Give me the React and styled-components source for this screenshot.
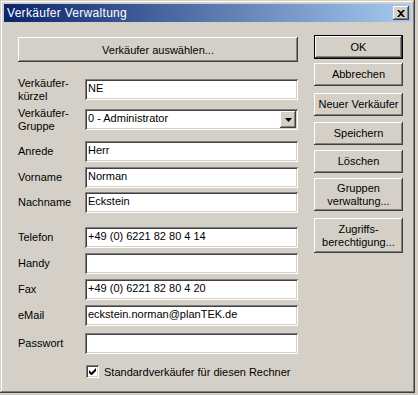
import React from "react";
import styled, { createGlobalStyle, css } from "styled-components";

const GlobalStyle = createGlobalStyle`
  html, body {
    margin: 0;
    background: #d4d0c8;
  }
  body {
    font-family: "Liberation Sans", Arial, sans-serif;
    font-size: 11px;
    color: #000;
  }
`;

const raised = css`
  background: #d4d0c8;
  box-shadow: inset -1px -1px #404040, inset 1px 1px #ffffff,
    inset -2px -2px #808080, inset 2px 2px #d4d0c8;
`;

const sunken = css`
  background: #ffffff;
  box-shadow: inset 1px 1px #808080, inset -1px -1px #ffffff,
    inset 2px 2px #404040, inset -2px -2px #d4d0c8;
`;

const Window = styled.div`
  width: 415px;
  height: 393px;
  box-sizing: border-box;
  padding: 4px;
  background: #d4d0c8;
  box-shadow: inset -1px -1px #404040, inset 1px 1px #d4d0c8,
    inset -2px -2px #808080, inset 2px 2px #ffffff;
`;

const TitleBar = styled.div`
  height: 18px;
  display: flex;
  align-items: center;
  justify-content: space-between;
  padding: 0 2px 0 3px;
  background: linear-gradient(to right, #0a246a, #a6caf0);
  color: #fff;
  font-size: 12px;
  letter-spacing: 0.3px;
`;

const CloseButton = styled.div`
  ${raised};
  width: 16px;
  height: 14px;
  display: flex;
  align-items: center;
  justify-content: center;
`;

const Body = styled.div`
  display: flex;
  align-items: flex-start;
  padding: 13px 8px 0 14px;
  gap: 16px;
`;

const LeftColumn = styled.div`
  width: 280px;
  padding-top: 2px;
`;

const RightColumn = styled.div`
  width: 89px;
  display: flex;
  flex-direction: column;
`;

const Button = styled.div`
  ${raised};
  box-sizing: border-box;
  height: ${p => p.$h || 23}px;
  margin-top: ${p => p.$mt || 0}px;
  display: flex;
  align-items: center;
  justify-content: center;
  text-align: center;
  line-height: 13px;
  ${p =>
    p.$default &&
    css`
      box-shadow: inset 0 0 0 1px #000, inset -2px -2px #404040,
        inset 2px 2px #ffffff, inset -3px -3px #808080,
        inset 3px 3px #d4d0c8;
    `}
`;

const WideButton = styled(Button)`
  width: 280px;
  height: 25px;
  padding-top: 1px;
`;

const Row = styled.div`
  display: flex;
  align-items: center;
  height: 21px;
  margin-top: ${p => p.$mt || 0}px;
`;

const Label = styled.div`
  width: 67px;
  flex: none;
  line-height: 13px;
`;

const Field = styled.div`
  ${sunken};
  box-sizing: border-box;
  width: 214px;
  height: 21px;
  padding: 2px 3px 0;
  line-height: 14px;
  white-space: nowrap;
  position: relative;
`;

const DropButton = styled.div`
  ${raised};
  position: absolute;
  top: 2px;
  right: 2px;
  width: 16px;
  height: 17px;
  display: flex;
  align-items: center;
  justify-content: center;
`;

const CheckRow = styled.div`
  display: flex;
  align-items: center;
  gap: 5px;
  margin: 11px 0 0 68px;
`;

const CheckBox = styled.div`
  ${sunken};
  width: 13px;
  height: 13px;
  display: flex;
  align-items: center;
  justify-content: center;
`;

const fields = [
  { label: <>Verkäufer-<br />kürzel</>, value: "NE", mt: 17 },
  { label: <>Verkäufer-<br />Gruppe</>, value: "0 - Administrator", mt: 9, combo: true },
  { label: "Anrede", value: "Herr", mt: 11 },
  { label: "Vorname", value: "Norman", mt: 5 },
  { label: "Nachname", value: "Eckstein", mt: 4 },
  { label: "Telefon", value: "+49 (0) 6221 82 80 4 14", mt: 14 },
  { label: "Handy", value: "", mt: 5 },
  { label: "Fax", value: "+49 (0) 6221 82 80 4 20", mt: 5 },
  { label: "eMail", value: "eckstein.norman@planTEK.de", mt: 5 },
  { label: "Passwort", value: "", mt: 7 },
];

const buttons = [
  { text: "OK", mt: 0, h: 24, def: true },
  { text: "Abbrechen", mt: 4 },
  { text: "Neuer Verkäufer", mt: 7 },
  { text: "Speichern", mt: 6 },
  { text: "Löschen", mt: 5 },
  { text: <>Gruppen<br />verwaltung...</>, mt: 5, h: 33 },
  { text: <>Zugriffs-<br />berechtigung...</>, mt: 7, h: 35 },
];

export default function App() {
  return (
    <>
      <GlobalStyle />
      <Window>
        <TitleBar>
          <span>Verkäufer Verwaltung</span>
          <CloseButton>
            <svg width="8" height="7" viewBox="0 0 8 7">
              <path d="M0 0h2l2 2 2-2h2L5 3.5 8 7H6L4 5 2 7H0l3-3.5z" fill="#000" />
            </svg>
          </CloseButton>
        </TitleBar>
        <Body>
          <LeftColumn>
            <WideButton>Verkäufer auswählen...</WideButton>
            {fields.map((f, i) => (
              <Row key={i} $mt={f.mt}>
                <Label>{f.label}</Label>
                <Field>
                  {f.value}
                  {f.combo && (
                    <DropButton>
                      <svg width="7" height="4" viewBox="0 0 7 4">
                        <path d="M0 0h7L3.5 4z" fill="#000" />
                      </svg>
                    </DropButton>
                  )}
                </Field>
              </Row>
            ))}
            <CheckRow>
              <CheckBox>
                <svg width="7" height="7" viewBox="0 0 7 7">
                  <path d="M0 2v3l2 2h1l4-4V0L2.5 4.5z" fill="#000" />
                </svg>
              </CheckBox>
              <span>Standardverkäufer für diesen Rechner</span>
            </CheckRow>
          </LeftColumn>
          <RightColumn>
            {buttons.map((b, i) => (
              <Button key={i} $mt={b.mt} $h={b.h} $default={b.def}>
                {b.text}
              </Button>
            ))}
          </RightColumn>
        </Body>
      </Window>
    </>
  );
}
